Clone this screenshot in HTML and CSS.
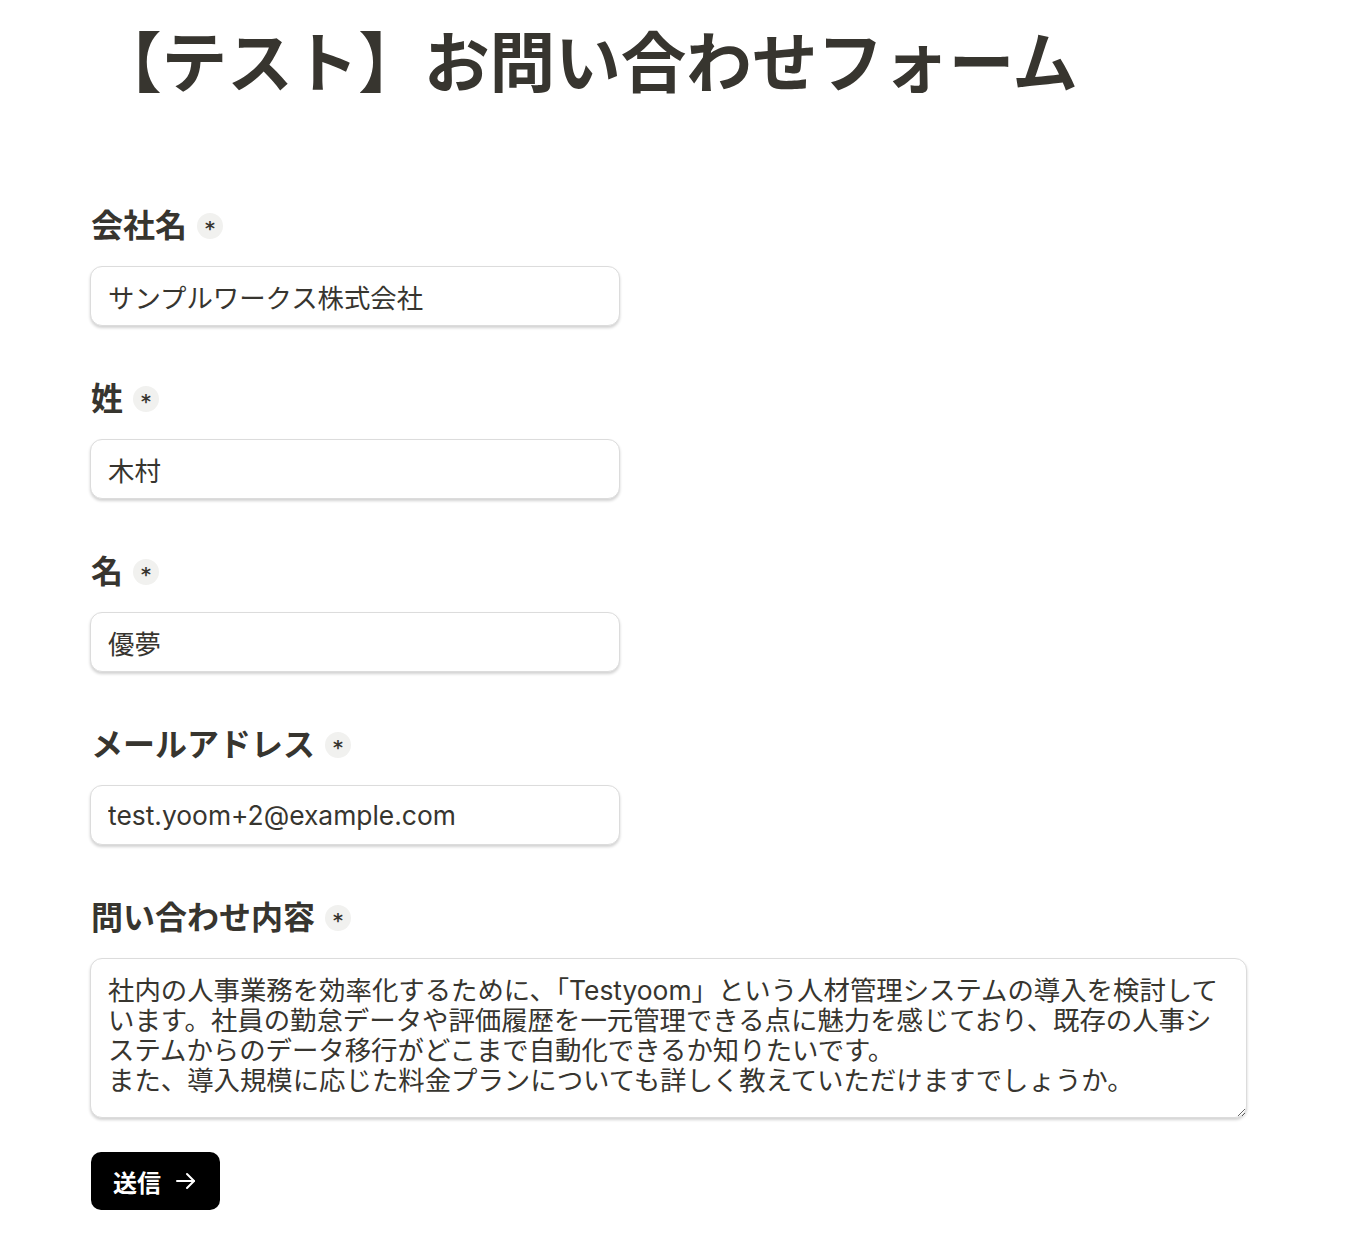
FILE: index.html
```html
<!DOCTYPE html>
<html lang="ja">
<head>
  <meta charset="UTF-8" />
  <meta name="viewport" content="width=device-width, initial-scale=1.0" />
  <title>【テスト】お問い合わせフォーム</title>
  <link rel="stylesheet" href="styles.css">
</head>
<body>
  <div class="form-page">
    <h1 class="form-title">【テスト】お問い合わせフォーム</h1>

    <form class="form">
      <div class="field">
        <label class="field-label">会社名<span class="required">*</span></label>
        <input class="field-input" type="text" value="サンプルワークス株式会社" />
      </div>

      <div class="field">
        <label class="field-label">姓<span class="required">*</span></label>
        <input class="field-input" type="text" value="木村" />
      </div>

      <div class="field">
        <label class="field-label">名<span class="required">*</span></label>
        <input class="field-input" type="text" value="優夢" />
      </div>

      <div class="field">
        <label class="field-label">メールアドレス<span class="required">*</span></label>
        <input class="field-input" type="email" value="test.yoom+2@example.com" />
      </div>

      <div class="field field-last">
        <label class="field-label">問い合わせ内容<span class="required">*</span></label>
        <textarea class="field-textarea">社内の人事業務を効率化するために、「Testyoom」という人材管理システムの導入を検討しています。社員の勤怠データや評価履歴を一元管理できる点に魅力を感じており、既存の人事システムからのデータ移行がどこまで自動化できるか知りたいです。
また、導入規模に応じた料金プランについても詳しく教えていただけますでしょうか。</textarea>
      </div>

      <button class="submit" type="button">
        送信
        <svg width="24" height="24" viewBox="0 0 24 24" fill="none" stroke="#fff" stroke-width="2" stroke-linecap="round" stroke-linejoin="round"><path d="M3 12h17"/><path d="M13 5l7 7-7 7"/></svg>
      </button>
    </form>
  </div>
</body>
</html>
```

FILE: styles.css
```css
* {
  margin: 0;
  padding: 0;
  box-sizing: border-box;
}

body {
  background: #fff;
  color: #37352f;
  font-family: Inter, "Noto Sans CJK JP", sans-serif;
}

.form-page {
  padding: 21px 0 40px 91px;
}

.form-title {
  font-size: 65.6px;
  font-weight: 700;
  line-height: 1.3;
  padding-left: 5px;
  margin-bottom: 101px;
}

.field {
  display: flex;
  flex-direction: column;
  margin-bottom: 54px;
}

.field-last {
  margin-bottom: 34px;
}

.field-label {
  display: flex;
  align-items: center;
  font-size: 32px;
  font-weight: 700;
  line-height: 38px;
  margin-bottom: 21px;
}

.required {
  display: inline-flex;
  align-items: center;
  justify-content: center;
  width: 26px;
  height: 26px;
  margin-left: 10px;
  border-radius: 50%;
  background: #f1f1ef;
  font-family: "DejaVu Sans", sans-serif;
  font-size: 19px;
  font-weight: 700;
  line-height: 1;
  padding-top: 5px;
}

.field-input,
.field-textarea {
  font-family: Inter, "Noto Sans CJK JP", sans-serif;
  font-size: 26.4px;
  color: #37352f;
  background: #fff;
  border: 1px solid #dcdcdc;
  border-radius: 12px;
  box-shadow: 0 2px 3px rgba(0, 0, 0, 0.18);
  padding: 0 17px;
  margin-left: -1px;
  outline: none;
}

.field-input {
  width: 530px;
  height: 60px;
}

.field-textarea {
  width: 1157px;
  height: 160px;
  padding: 16px 17px;
  line-height: 30px;
  resize: vertical;
}

.submit {
  display: inline-flex;
  align-items: center;
  gap: 13px;
  height: 58px;
  padding: 0 22px;
  border: none;
  border-radius: 10px;
  background: #000;
  color: #fff;
  font-family: Inter, "Noto Sans CJK JP", sans-serif;
  font-size: 24px;
  font-weight: 700;
}
```
